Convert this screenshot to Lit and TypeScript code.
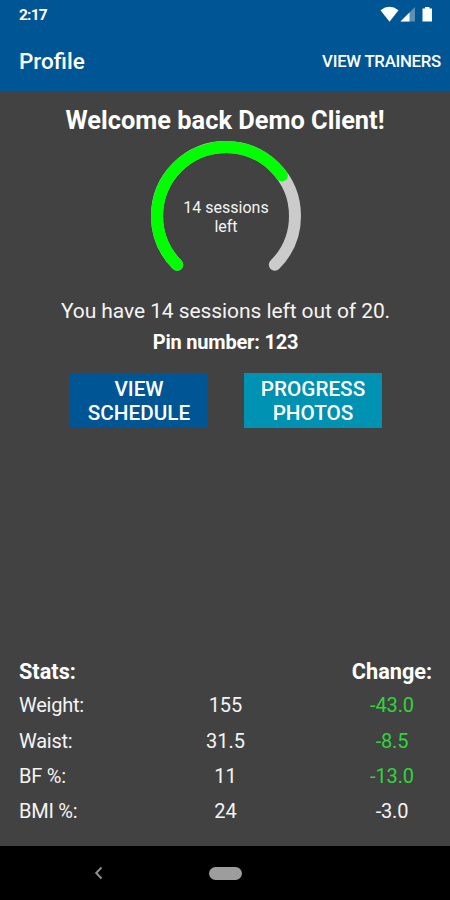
import { LitElement, html, css, svg } from "lit";
import { customElement, property } from "lit/decorators.js";

interface Stat {
  label: string;
  value: string;
  change: string;
  improved: boolean;
}

const STATS: Stat[] = [
  { label: "Weight:", value: "155", change: "-43.0", improved: true },
  { label: "Waist:", value: "31.5", change: "-8.5", improved: true },
  { label: "BF %:", value: "11", change: "-13.0", improved: true },
  { label: "BMI %:", value: "24", change: "-3.0", improved: false },
];

@customElement("session-gauge")
export class SessionGauge extends LitElement {
  @property({ type: Number }) left = 0;
  @property({ type: Number }) total = 1;

  static styles = css`
    :host { display: grid; width: 150px; height: 150px; place-items: center; }
    svg, .label { grid-area: 1 / 1; }
    .label {
      width: 100px;
      text-align: center;
      font-size: 16px;
      line-height: 19px;
      color: #f4f4f4;
      padding-top: 2px;
    }
  `;

  private arc(sweep: number, color: string) {
    const r = 69;
    const point = (deg: number) => {
      const a = (deg * Math.PI) / 180;
      return `${75 + r * Math.sin(a)} ${75 - r * Math.cos(a)}`;
    };
    return svg`<path d="M${point(-135)} A${r} ${r} 0 ${sweep > 180 ? 1 : 0} 1 ${point(-135 + sweep)}"
      fill="none" stroke=${color} stroke-width="12" stroke-linecap="round"/>`;
  }

  render() {
    return html`
      <svg width="150" height="150" viewBox="0 0 150 150">
        ${this.arc(270, "#cbcbcb")}
        ${this.arc((270 * this.left) / this.total, "#00ff00")}
      </svg>
      <div class="label">${this.left} sessions<br />left</div>
    `;
  }
}

@customElement("app-root")
export class AppRoot extends LitElement {
  static styles = css`
    :host {
      display: flex;
      flex-direction: column;
      width: 450px;
      height: 900px;
      overflow: hidden;
      background: #424242;
      color: #fff;
      font-family: Roboto, "Liberation Sans", sans-serif;
    }
    header { height: 92px; background: #005595; flex: none; }
    .status {
      display: flex;
      justify-content: space-between;
      height: 30px;
      padding: 0 16px 0 19px;
      align-items: center;
      box-sizing: border-box;
    }
    .clock { font-size: 15.5px; font-weight: 700; line-height: 28px; height: 29px; letter-spacing: -0.8px; }
    .bar {
      display: flex;
      justify-content: space-between;
      align-items: center;
      height: 62px;
      padding: 0 9px 0 19px;
    }
    .title { font-size: 22.5px; font-weight: 500; }
    .action { font-size: 16.8px; font-weight: 500; letter-spacing: -0.27px; }
    main {
      flex: 1;
      display: flex;
      flex-direction: column;
      align-items: center;
    }
    h1 { margin: 12px 0 0; font-size: 25.4px; font-weight: 700; line-height: 32px; }
    session-gauge { margin: 5px 0 0 2px; }
    .summary { margin-top: 8px; font-size: 21px; line-height: 24px; color: #f4f4f4; letter-spacing: -0.08px; padding-left: 1px; }
    .pin { margin-top: 7px; font-size: 20px; font-weight: 700; line-height: 24px; letter-spacing: -0.2px; padding-left: 1px; }
    .buttons { display: flex; gap: 36px; margin: 19px 0 0 2px; }
    .button {
      width: 138px;
      height: 55px;
      border: 0;
      padding: 0;
      color: #fff;
      font: 500 20.7px/24px Roboto, "Liberation Sans", sans-serif;
      background: #005595;
    }
    .button.photos { background: #0092b2; }
    .stats {
      margin-top: auto;
      width: 450px;
      box-sizing: border-box;
      padding: 0 9px 17px 19px;
      display: grid;
      grid-template-columns: 157px 99px 1fr 98px;
      grid-template-rows: 32px repeat(4, 35.3px);
      align-items: center;
      font-size: 20px;
      color: #f4f4f4;
    }
    .name { letter-spacing: -0.25px; }
    .head { font-weight: 700; font-size: 21.7px; color: #fff; }
    .value { text-align: center; }
    .change { grid-column: 4; text-align: center; }
    .stats .change:not(.head) { letter-spacing: -0.15px; }
    .improved { color: #2fd53a; }
    nav {
      flex: none;
      height: 54px;
      background: #000;
      display: flex;
      align-items: center;
      padding-left: 94px;
    }
    .home { width: 33px; height: 13px; border-radius: 7px; background: #9d9d9d; margin-left: 105px; }
  `;

  render() {
    return html`
      <header>
        <div class="status">
          <span class="clock">2:17</span>
          <svg width="54" height="18" viewBox="0 0 54 18">
            <path d="M0.5 4.3Q9.5 -2.6 18.5 4.3L9.5 15.8Z" fill="#fff"/>
            <path d="M20.5 15.5L35 1V15.5Z" fill="#5c91b3"/>
            <path d="M20.5 15.5L29.5 6.5V15.5Z" fill="#fff"/>
            <path d="M42.5 2.5H45V1H49.5V2.5H52V15.5H42.5Z" fill="#fff"/>
          </svg>
        </div>
        <div class="bar">
          <span class="title">Profile</span>
          <span class="action">VIEW TRAINERS</span>
        </div>
      </header>
      <main>
        <h1>Welcome back Demo Client!</h1>
        <session-gauge left="14" total="20"></session-gauge>
        <div class="summary">You have 14 sessions left out of 20.</div>
        <div class="pin">Pin number: 123</div>
        <div class="buttons">
          <button class="button">VIEW<br />SCHEDULE</button>
          <button class="button photos">PROGRESS<br />PHOTOS</button>
        </div>
        <section class="stats">
          <span class="head">Stats:</span>
          <span class="head change">Change:</span>
          ${STATS.map(
            (s) => html`
              <span class="name">${s.label}</span>
              <span class="value">${s.value}</span>
              <span class="change ${s.improved ? "improved" : ""}">${s.change}</span>
            `
          )}
        </section>
      </main>
      <nav>
        <svg width="10" height="14" viewBox="0 0 10 14">
          <path d="M7.5 1.5L2.2 7L7.5 12.5" fill="none" stroke="#8e8e8e" stroke-width="2"/>
        </svg>
        <div class="home"></div>
      </nav>
    `;
  }
}
